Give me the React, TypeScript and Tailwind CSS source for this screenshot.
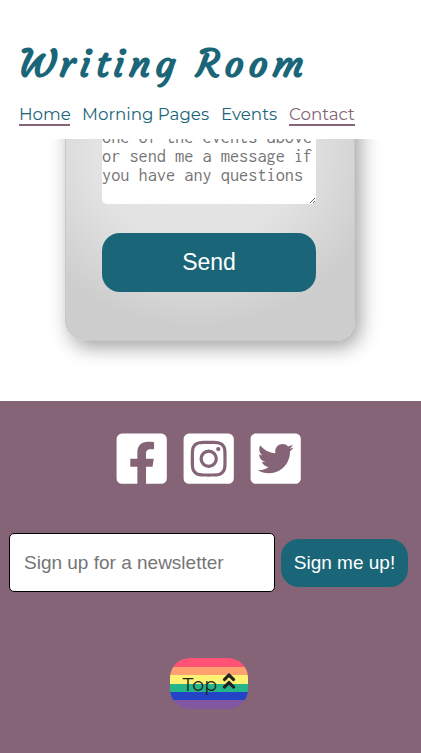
import React from "react";
import { FaFacebookSquare, FaInstagramSquare, FaTwitterSquare, FaAngleDoubleUp } from "react-icons/fa";

const montserrat = "font-['Montserrat','Lato',sans-serif]";
const arial = "font-['Liberation_Sans',Arial,sans-serif]";

function Header() {
  return (
    <header className="h-[139px] bg-white pl-[19px] pt-[38px] text-[#1a6678]">
      <h1 className="flex h-[52px] items-center whitespace-nowrap font-['Courgette','Kaushan_Script','Lato',cursive] text-[38px] font-bold leading-[52px]">
        <span className="w-[177px] tracking-[4.7px]">Writing</span>
        <span className="tracking-[4.7px]">Room</span>
      </h1>
      <nav className={`mt-[13px] flex h-[24px] whitespace-nowrap text-[16.7px] leading-[22px] ${montserrat}`}>
        <a className="mr-[12px] h-[23px] w-[51px] border-b-2 border-[#846476]">Home</a>
        <a className="mr-[12px] w-[127px]">Morning Pages</a>
        <a className="mr-[12px] w-[56px]">Events</a>
        <a className="h-[23px] w-[66px] border-b-2 border-[#846476] text-[#846476]">Contact</a>
      </nav>
    </header>
  );
}

function ContactForm() {
  return (
    <main className="h-[262px] overflow-hidden bg-white">
      <form className="-mt-[298px] ml-[65px] flex h-[500px] w-[290px] flex-col rounded-[20px] border border-[#c8c8c8] bg-[radial-gradient(ellipse_240px_220px_at_130px_310px,#e5e5e5_0%,#e3e3e3_42%,#cdcdcd_80%)] px-[36px] pt-[263px] shadow-[5px_6px_20px_rgba(0,0,0,0.38)]">
        <div className="relative h-[99px] w-[214px] rounded-[5px] bg-white pt-[3px] font-['Inconsolata','Noto_Sans_Mono','DejaVu_Sans_Mono',monospace] text-[18.3px] leading-[19px] text-[#757575]">
          <p className="whitespace-pre">{"\none of the events above\nor send me a message if\nyou have any questions"}</p>
          <svg className="absolute bottom-0 right-0 size-[6px]" viewBox="0 0 6 6" stroke="#444" strokeWidth=".8">
            <path d="M0 5L5 0M3 5L5 3" />
          </svg>
        </div>
        <button type="button" className={`mt-[29px] h-[59px] w-[214px] shrink-0 rounded-[18px] bg-[#1a6678] text-[23px] text-white ${arial}`}>Send</button>
      </form>
    </main>
  );
}

function Footer() {
  return (
    <footer className="flex h-[352px] flex-col items-center bg-[#846476]">
      <div className="mr-[4px] mt-[29px] flex h-[58px] gap-[9.4px] text-white">
        <FaFacebookSquare size={57.4} />
        <FaInstagramSquare size={57.4} />
        <FaTwitterSquare size={57.4} />
      </div>
      <div className={`mt-[45px] flex w-full items-center gap-[6px] pl-[9px] ${arial}`}>
        <input placeholder="Sign up for a newsletter" className="h-[59px] w-[266px] rounded-[5px] border border-black bg-white px-[14px] text-[19px] placeholder:text-[#757575]" />
        <button className="h-[48px] w-[127px] whitespace-nowrap rounded-[18px] bg-[#1a6678] pt-px text-[19px] text-white">Sign me up!</button>
      </div>
      <a className={`mr-[4px] mt-[66px] flex h-[51px] w-[78px] items-center rounded-[20px] bg-[linear-gradient(#ff5277_0_17%,#ffa06f_17%_34%,#fff173_34%_50%,#24b588_50%_67%,#2344c7_67%_83%,#8057a0_83%)] pl-[13px] text-[19px] text-[#222] ${montserrat}`}>
        <span className="mt-[4px] w-[36px]">Top</span>
        <FaAngleDoubleUp className="mb-[5px]" size={20} />
      </a>
    </footer>
  );
}

export default function App() {
  return (
    <div className="h-[753px] w-[421px] overflow-hidden bg-white">
      <Header />
      <ContactForm />
      <Footer />
    </div>
  );
}
